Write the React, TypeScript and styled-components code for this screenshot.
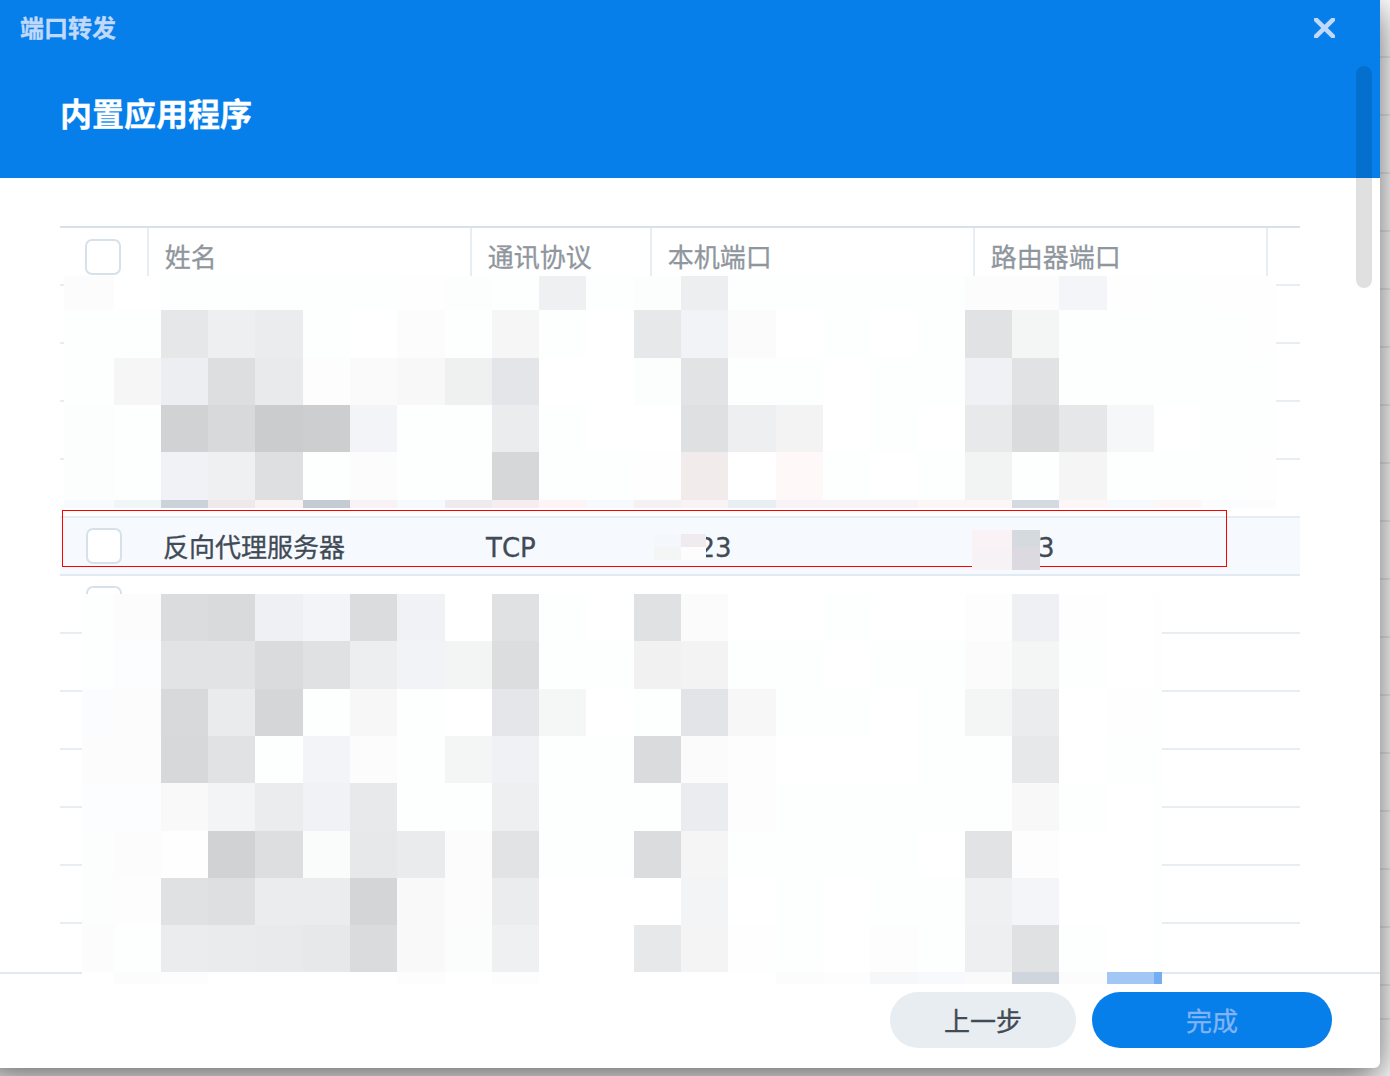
import React from 'react';
import styled, { createGlobalStyle } from "styled-components";

const columns = ['姓名', '通讯协议', '本机端口', '路由器端口']

// column widths of the mosaic in px, blocks are 47.33px wide
const blocks = '47px 47px 47px 48px 47px 47px 48px 47px 47px 47px 48px 47px 47px 48px 47px 47px 48px 47px 47px 47px 48px'

// '-' is an almost white block
const topMosaic = [
  'fcfcfc fff - - - - - fefefe fcfefd - eff0f2 - fcfefd edeef0 - - - - - fcfcfd fcfcfc f4f5f8 fefefe - fefefe fefefe',
  '- - e6e7e9 eeeff1 ebecee - fff fcfcfc - f6f6f6 - fff e7e8ea f1f3f6 fbfbfb fff - fff - e1e2e4 f4f6f6 - - - - fefefe',
  '- f6f6f6 edeef1 dddee0 e9eaec fdfdfd fafafa f8f8f8 eff1f0 e4e5e8 fff fff fcfefd e2e3e5 - - fff - - f0f1f4 e1e2e4 - - - - -',
  'fcfefd - d1d2d4 d8d9db cbccce cdced0 f3f4f7 - - ebecee - fff fff dfe0e2 eeeff0 f3f3f3 fff - fff e8e9ea dadbdd e6e7e8 f6f7f9 fff - -',
  'fcfefd - f1f2f5 eff0f2 dedfe1 - fdfcfd - - d6d7d9 - - fefefe f1ebeb fff fff8f8 - fff - f2f4f3 - f5f5f5 - - - fefefe',
  'f7fafe f0f5f8 ccd2da efe9ec faf3f4 c5cbd3 f8f2f5 f6faff efeaed f5edf0 fdf5f5 f6faff f5f1f3 faf3f5 e9eef3 f7f3f6 f7f3f6 f7f3f6 fdf6f6 fdf6f6 d5dae1 fdf6f6 f6faff fdf6f6 fbfcfe fcfcfd',
]

const bottomMosaic = [
  '- fcfcfc dbdcde d9dadc eff0f3 f3f4f7 dbdcde f1f2f5 fff e0e1e3 - fff e0e1e3 fbfbfb fff fff - fff fff fdfdfd eff0f3 fefefe fff fefefe',
  '- fcfdff e2e3e5 e2e3e5 dadbdd e0e1e3 edeef0 f2f3f6 f3f5f4 dcdddf - - f1f1f1 f3f3f3 - - fff - - fbfbfb f4f6f5 - fff fefefe',
  'fbfcff fcfcfc d8d9db eaebed d5d6d8 - f8f7f8 - fff e5e6e9 f5f7f6 fff - e3e4e7 f7f7f7 - - fff - f4f6f5 ebecee fff fefefe -',
  'fcfcfc fcfcfc d7d8da e1e2e4 - f2f4f7 fdfcfd - f4f6f5 f0f1f4 - - dadbdd fafbfa fdfdfd fff fefffe fff - - e7e8ea fff - -',
  'fbfdff fbfdff f9f9f9 f2f4f6 ebecee f1f2f5 e8e9eb - - eeeff1 - - - ebecef fdfdfd - - - - - f8f8f8 - fff -',
  'fcfefd fcfcfc fefefe d1d2d4 dddee0 fafcfb e6e8ea eaebed fcfcfd e2e3e5 - - dbdcde f5f5f5 - - - - fff e2e3e5 fefdfe fff fff -',
  'fcfefd fdfdfd dfe1e3 dedfe1 ebecee ebecee d4d5d7 f9f9f9 fdfcfd ebecee fff fff fff f2f4f6 fff - fff - - eff0f2 f4f5f8 fff fff -',
  'fcfcfc - ebecee eaebed e9eaec e7e8ea dadbdd f9f9f9 fbfdfc eff0f2 fff fff e7e8e9 f4f4f4 fefefe - fff fdfdfd - eeeff1 dfe1e2 - fff -',
  'fff fcfcfc fdfdfd fff fff fff fff fdfdfd fff fdfdfd fff fff fff fff fff fcfcfc fdfdfd f5f7f9 f8f9fc fafafa ced5dc fcfcfc a2c7f5 74adf1',
]

type MosaicPropsType = {
  x: number
  y: number
  cols: string
  rows: string
  data: string[]
}

const Mosaic = (props: MosaicPropsType) => {
  return (
    <MosaicWrapper x={props.x} y={props.y} cols={props.cols} rows={props.rows}>
      {props.data.join(' ').split(' ').map((color, i) => (
        <Block key={i} color={color === '-' ? '#fdfffe' : '#' + color}/>
      ))}
    </MosaicWrapper>
  );
};

const EmptyRow = () => (
  <Row>
    <CheckCell><Checkbox/></CheckCell>
  </Row>
);

const App = () => {
  return (
    <Page>
      <GlobalStyle/>
      <Window>
        <Header>
          <TitleBar>
            <WindowTitle>端口转发</WindowTitle>
            <CloseIcon viewBox="0 0 21 20">
              <path d="M2 1.6 L19 18.4 M19 1.6 L2 18.4"/>
            </CloseIcon>
          </TitleBar>
          <StepTitle>内置应用程序</StepTitle>
        </Header>
        <Body>
          <Table>
            <HeadRow>
              <HeadCheckCell><Checkbox/></HeadCheckCell>
              {columns.map(name => <HeadCell key={name}>{name}</HeadCell>)}
            </HeadRow>
            <EmptyRow/>
            <EmptyRow/>
            <EmptyRow/>
            <EmptyRow/>
            <Row active>
              <CheckCell><Checkbox/></CheckCell>
              <Cell>反向代理服务器</Cell>
              <Cell>TCP</Cell>
              <Cell skip={32.5}>23</Cell>
              <Cell skip={49}>3</Cell>
            </Row>
            <EmptyRow/>
            <EmptyRow/>
            <EmptyRow/>
            <EmptyRow/>
            <EmptyRow/>
            <EmptyRow/>
            <EmptyRow/>
          </Table>
        </Body>
        <Footer>
          <Button>上一步</Button>
          <Button primary>完成</Button>
        </Footer>
        <Scrollbar/>
      </Window>
      <RedFrame/>
      <Mosaic x={64} y={276} cols={`50px ${blocks} 47px 47px 47px 28px`}
              rows="34px 48px 47px 47px 48px 8px" data={topMosaic}/>
      <Mosaic x={82} y={594} cols={`32px ${blocks} 47px 8px`}
              rows="47px 48px 47px 47px 48px 47px 47px 47px 12px" data={bottomMosaic}/>
      <Mosaic x={654} y={534} cols="27px 25px" rows="13px 13px" data={['f4f8fd f0ebef', 'f4f6f6 fdfdfd']}/>
      <Mosaic x={972} y={530} cols="40px 28px" rows="17px 23px" data={['faf2f5 d5dadf', 'f7f2f6 dcdae0']}/>
    </Page>
  );
};

export default App;

const GlobalStyle = createGlobalStyle`
  body {
    margin: 0;
    overflow: hidden;
  }

  * {
    box-sizing: border-box;
  }
`
const Page = styled.div`
  position: relative;
  width: 1390px;
  height: 1076px;
  overflow: hidden;
  font-family: "DejaVu Sans", "Noto Sans CJK SC", sans-serif;
  font-size: 26px;
  font-kerning: none;
  -webkit-text-stroke: 0.3px;
  color: #414b55;
  background: linear-gradient(#e6edf2, #e6edf2) 0 1018px / 100% 2px no-repeat,
    repeating-linear-gradient(transparent 0 56px, #e6edf2 56px 58px) 0 0 / 100% 986px no-repeat,
    #fff;
`
// the window sticks out past the left edge of the screen
const Window = styled.div`
  position: relative;
  display: flex;
  flex-direction: column;
  width: 1400px;
  height: 1068px;
  margin-left: -20px;
  background-color: #fff;
  border-radius: 0 0 6px 6px;
  box-shadow: 0 10px 37px rgba(0, 0, 0, 0.62);
`
const Header = styled.div`
  flex: none;
  height: 178px;
  padding: 0 45px 0 40px;
  background-color: #067feb;
`
const TitleBar = styled.div`
  display: flex;
  justify-content: space-between;
  align-items: center;
  height: 56px;
`
const WindowTitle = styled.div`
  padding-top: 2px;
  font-size: 24px;
  line-height: 36px;
  font-weight: 700;
  color: #c0d9fb;
`
const CloseIcon = styled.svg`
  width: 21px;
  height: 20px;
  fill: none;
  stroke: #c0d9fb;
  stroke-width: 4.6;
  stroke-linecap: round;
`
const StepTitle = styled.div`
  padding: 35px 0 0 40px;
  font-size: 32px;
  line-height: 48px;
  font-weight: 700;
  color: #fff;
`
const Body = styled.div`
  flex: none;
  height: 794px;
  padding: 48px 80px 0;
  overflow: hidden;
`
const Table = styled.div`
  border-top: 2px solid #d7e1ea;
`
const Row = styled.div<{ active?: boolean }>`
  display: grid;
  grid-template-columns: 89px 323px 180px 323px 293px 1fr;
  height: 58px;
  border-bottom: 2px solid ${props => props.active ? '#e1e9f2' : '#e8edf1'};
  background-color: ${props => props.active ? '#f6f9fe' : '#fff'};
`
const HeadRow = styled(Row)`
  color: #8f969d;
`
const CheckCell = styled.div`
  padding: 10px 0 0 26px;
`
const HeadCheckCell = styled.div`
  padding: 11px 0 0 25px;
  border-right: 2px solid #e8edf1;
`
const Checkbox = styled.div`
  width: 36px;
  height: 36px;
  border: 2px solid #d7e1ea;
  border-radius: 7px;
  background-color: #fff;
`
const HeadCell = styled.div`
  height: 56px;
  padding-left: 15.7px;
  line-height: 60px;
  border-right: 2px solid #e8edf1;
`
const Cell = styled.div<{ skip?: number }>`
  height: 56px;
  padding-left: ${props => 14 + (props.skip || 0)}px;
  line-height: 60px;
`
const Footer = styled.div`
  display: flex;
  flex: 1;
  justify-content: flex-end;
  align-items: flex-start;
  gap: 16px;
  padding: 18px 48px 0 0;
  border-top: 2px solid #e1e8f1;
`
const Button = styled.button<{ primary?: boolean }>`
  width: ${props => props.primary ? '240px' : '186px'};
  height: 56px;
  padding: 0 0 2px;
  border: none;
  border-radius: 28px;
  font: inherit;
  color: ${props => props.primary ? '#82b4f5' : '#414b55'};
  background-color: ${props => props.primary ? '#067feb' : '#e8edf1'};
`
const Scrollbar = styled.div`
  position: absolute;
  top: 66px;
  right: 8px;
  width: 16px;
  height: 222px;
  border-radius: 8px;
  background-color: rgba(0, 0, 0, 0.12);
`
const RedFrame = styled.div`
  position: absolute;
  left: 62px;
  top: 510px;
  width: 1165px;
  height: 57px;
  border: 1px solid #fe0000;
`
const MosaicWrapper = styled.div<{ x: number, y: number, cols: string, rows: string }>`
  position: absolute;
  left: ${props => props.x}px;
  top: ${props => props.y}px;
  display: grid;
  grid-template-columns: ${props => props.cols};
  grid-template-rows: ${props => props.rows};
`
const Block = styled.div<{ color: string }>`
  background-color: ${props => props.color};
`
